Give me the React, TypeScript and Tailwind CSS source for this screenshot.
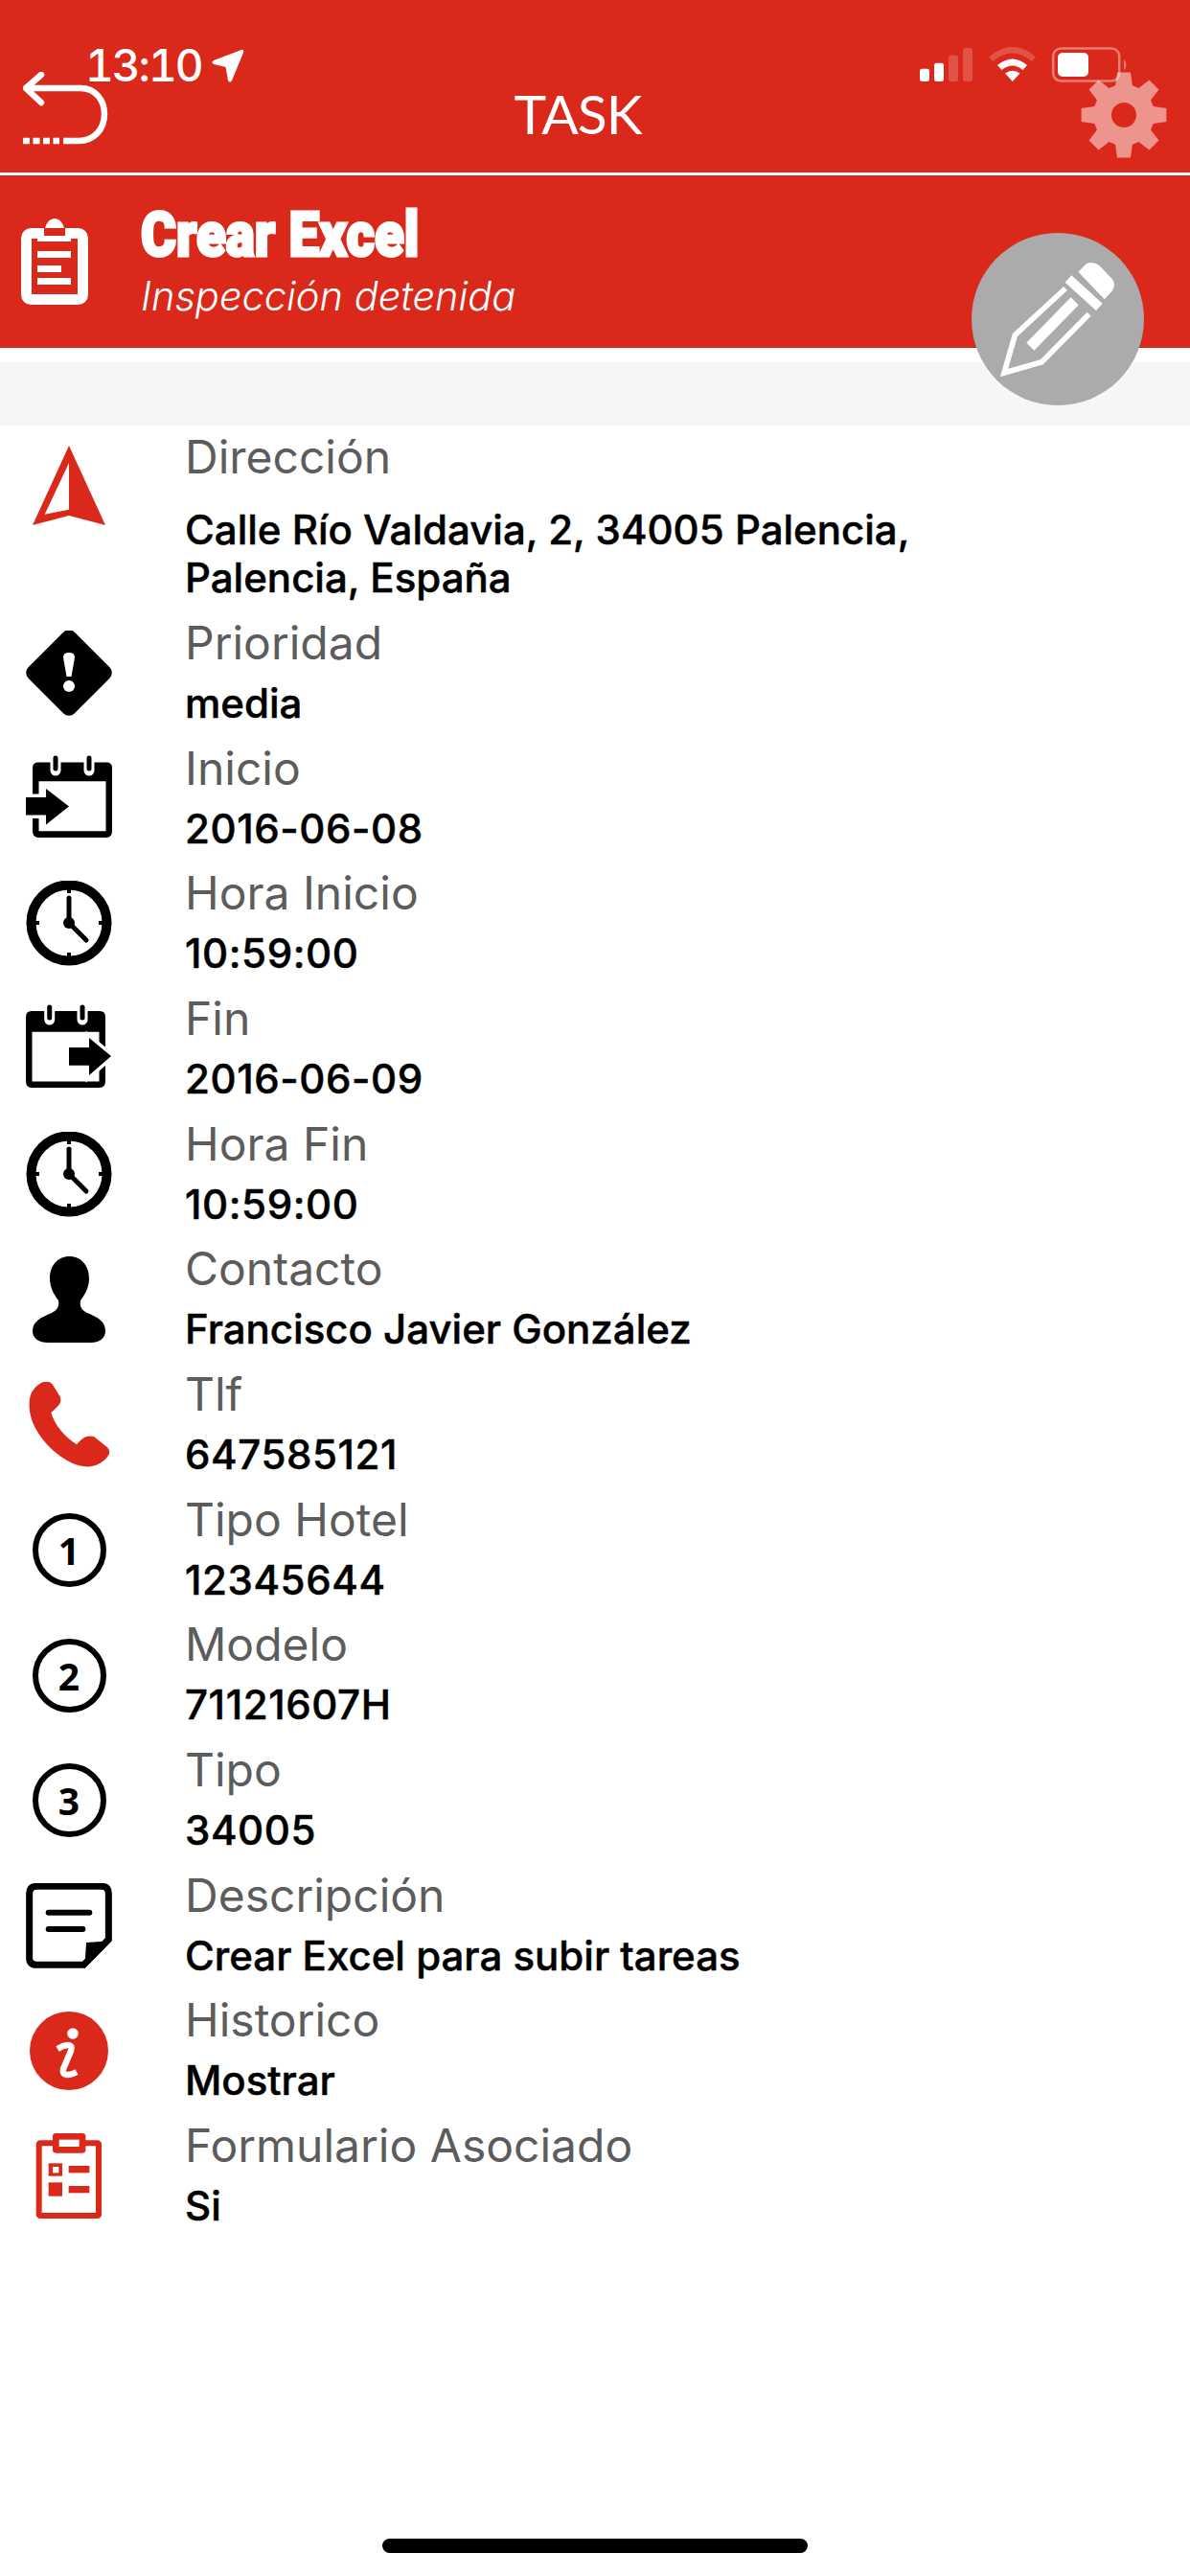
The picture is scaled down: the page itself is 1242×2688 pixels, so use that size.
import type { ReactNode } from 'react';

const RED = '#da291a';

function gearPath() {
  const cx = 45;
  const cy = 45;
  const pts: string[] = [];
  for (let i = 0; i < 8; i++) {
    const a = (i * Math.PI) / 4 - Math.PI / 2;
    const step = Math.PI / 4;
    const at = (r: number, t: number) =>
      `${(cx + r * Math.cos(t)).toFixed(1)} ${(cy + r * Math.sin(t)).toFixed(1)}`;
    pts.push(at(32, a - step * 0.36), at(45, a - step * 0.2), at(45, a + step * 0.2), at(32, a + step * 0.36));
  }
  return `M${pts.join('L')}Z M58 45 A13 13 0 1 0 32 45 A13 13 0 1 0 58 45Z`;
}

function BackIcon() {
  return (
    <svg viewBox="0 0 90 90" className="w-[90px] h-[90px] shrink-0" fill="none" stroke="white" strokeWidth="6.5">
      <path d="M19 3 L3 17 L19 32" strokeLinecap="round" strokeLinejoin="round" />
      <path d="M3 17 H60 C76 17 85 30 85 44 C85 60 74 72 58 72 H42" />
      <path d="M0 72 H38" strokeDasharray="7 3.5" />
    </svg>
  );
}

function GearIcon() {
  return (
    <svg viewBox="0 0 90 90" className="w-[90px] h-[90px] shrink-0">
      <path d={gearPath()} fill="white" fillOpacity="0.5" fillRule="evenodd" />
    </svg>
  );
}

function ClipboardWhite() {
  return (
    <svg viewBox="22 228 70 90" className="w-[70px] h-[90px] shrink-0">
      <rect x="27.5" y="243.5" width="59" height="69" rx="5" fill="none" stroke="white" strokeWidth="11" />
      <path d="M39 252 V238 H47 Q50 228 57 228 Q64 228 67 238 H74 V252 Z" fill="white" />
      <rect x="46" y="238" width="22" height="8" fill={RED} />
      <rect x="39" y="262" width="35" height="7" fill="white" />
      <rect x="39" y="277" width="25" height="7" fill="white" />
      <rect x="39" y="290" width="35" height="7" fill="white" />
    </svg>
  );
}

function PencilIcon() {
  return (
    <svg viewBox="342 668 540 540" className="w-full h-full">
      <path d="M676 790 L702 764 Q722 755 742 770 L782 812 Q796 830 782 850 L758 876 Z" fill="white" />
      <path d="M645 812 L742 900" stroke="white" strokeWidth="30" fill="none" />
      <path d="M636 842 L478 988 L444 1106 L562 1072 L710 922" stroke="white" strokeWidth="17" fill="none" />
      <path d="M665 882 L526 1024" stroke="white" strokeWidth="34" fill="none" />
    </svg>
  );
}

function StatusBar() {
  return (
    <div className="absolute inset-x-0 top-0 h-[100px]">
      <span className="absolute left-[89px] top-[40px] text-[46px] leading-[56px] font-medium tabular-nums tracking-[-2px] text-white [font-family:Inter,sans-serif]">
        13:10
      </span>
      <svg viewBox="0 0 34 36" className="absolute left-[221px] top-[51px] w-[34px] h-[36px]">
        <path d="M31 1 Q34 0 33 4 L21 33 Q19 36 17 33 L14.5 19 L2 16 Q-1 14 2 12 Z" fill="white" />
      </svg>
      <svg viewBox="960 49 218 37" className="absolute left-[960px] top-[49px] w-[218px] h-[37px]">
        <rect x="960" y="71.7" width="10" height="13.3" rx="2.5" fill="white" />
        <rect x="975" y="65.7" width="10" height="19.3" rx="2.5" fill="white" />
        <rect x="990" y="57.7" width="10" height="27.3" rx="2.5" fill="white" fillOpacity="0.2" />
        <rect x="1005" y="50" width="10" height="35" rx="2.5" fill="white" fillOpacity="0.2" />
        <path d="M1032 59.5 Q1056.7 38 1081 59.5 L1077 64 Q1056.7 47 1036 64 Z" fill="white" fillOpacity="0.2" />
        <path d="M1041 68 Q1056.7 55 1072 68 L1067.5 73 Q1056.7 64 1045.5 73 Z" fill="white" />
        <path d="M1049 76.5 Q1056.7 71 1064.5 76.5 L1056.7 85 Z" fill="white" />
        <rect x="1099.2" y="50.5" width="69" height="34" rx="8" fill="none" stroke="white" strokeOpacity="0.4" strokeWidth="2.5" />
        <rect x="1104" y="55" width="32" height="25" rx="5" fill="white" />
        <path d="M1173 61.5 Q1177.5 67.5 1173 73.5 Z" fill="white" fillOpacity="0.4" />
      </svg>
    </div>
  );
}

function NavIcon() {
  return (
    <svg viewBox="0 0 90 90" className="w-[90px] h-[90px]">
      <path d="M45 1 L83 84 L45 74 L7 84 Z M45 19 L19.7 72.7 L45 67.7 Z" fill={RED} fillRule="evenodd" />
    </svg>
  );
}

function PriorityIcon() {
  return (
    <svg viewBox="0 0 90 90" className="w-[90px] h-[90px]">
      <rect x="11" y="10" width="68" height="68" rx="8" transform="rotate(45 45 44)" fill="black" />
      <path d="M39 28 Q39 23 45 23 Q51 23 51 28 L47.5 48 H42.5 Z" fill="white" />
      <circle cx="45" cy="58" r="6" fill="white" />
    </svg>
  );
}

function CalendarIn() {
  return (
    <svg viewBox="0 0 90 90" className="w-[90px] h-[90px] overflow-visible">
      <path d="M13 6.4 H84 Q90 6.4 90 12 V78 Q90 85 84 85 H13 Q7 85 7 78 V12 Q7 6.4 13 6.4 Z M13.5 26.3 V78.3 H83.5 V26.3 Z" fill="black" fillRule="evenodd" />
      <path d="M31 2 V15 M66 2 V15" stroke="white" strokeWidth="11" strokeLinecap="round" />
      <path d="M31 2 V13 M66 2 V13" stroke="black" strokeWidth="5" strokeLinecap="round" />
      <path d="M0 43 H21 V34 L45 52.5 L21 71.5 V61.5 H0 Z" fill="black" stroke="white" strokeWidth="7" paintOrder="stroke" />
    </svg>
  );
}

function CalendarOut() {
  return (
    <svg viewBox="0 0 90 90" className="w-[90px] h-[90px] overflow-visible">
      <path d="M6 5 H77 Q83 5 83 11 V78 Q83 85 77 85 H6 Q0 85 0 78 V11 Q0 5 6 5 Z M6.5 26.7 V78.5 H76.5 V26.7 Z" fill="black" fillRule="evenodd" />
      <path d="M24.7 1 V14 M59 1 V14" stroke="white" strokeWidth="11" strokeLinecap="round" />
      <path d="M24.7 1 V12 M59 1 V12" stroke="black" strokeWidth="5" strokeLinecap="round" />
      <path d="M45 43 H66 V33 L89 52 L66 72 V61.7 H45 Z" fill="black" stroke="white" strokeWidth="7" paintOrder="stroke" />
    </svg>
  );
}

function ClockIcon() {
  return (
    <svg viewBox="0 0 90 90" className="w-[90px] h-[90px]" fill="none" stroke="black">
      <circle cx="45" cy="44" r="39.5" strokeWidth="10" />
      <path d="M45 8 V13 M45 75 V80 M9 44 H14 M76 44 H81" strokeWidth="4" />
      <path d="M45 18 V44 L63 62" strokeWidth="5" strokeLinecap="round" />
      <circle cx="45" cy="44" r="6" fill="black" stroke="none" />
    </svg>
  );
}

function PersonIcon() {
  return (
    <svg viewBox="0 0 90 90" className="w-[90px] h-[90px]">
      <path
        d="M45.5 0 C58 0 66 10 66 23 C66 34 60 42 57 46 C56 52 58 56 64 59 C76 64 83 68 83 78 C83 86 76 90 68 90 H23 C14 90 7 86 7 78 C7 68 15 64 27 59 C33 56 35 52 34 46 C31 42 25 34 25 23 C25 10 33 0 45.5 0 Z"
        fill="black"
      />
    </svg>
  );
}

function PhoneIcon() {
  return (
    <svg viewBox="81 126 270 270" className="w-[90px] h-[90px]">
      <path
        d="M120 135 C135 122 155 120 165 135 L188 172 C195 190 185 200 160 222 C170 260 205 300 240 322 C255 305 270 290 295 298 L335 330 C345 340 345 350 335 362 C315 385 290 395 260 390 C190 380 95 290 92 205 C90 170 100 150 120 135 Z"
        fill={RED}
      />
    </svg>
  );
}

function NumberIcon({ n }: { n: string }) {
  return (
    <div className="w-[90px] h-[90px] flex items-center justify-center">
      <div className="w-[77px] h-[77px] rounded-full border-[6px] border-black flex items-center justify-center text-[39px] leading-none font-bold text-black [font-family:'Open_Sans',sans-serif]">
        {n}
      </div>
    </div>
  );
}

function NoteIcon() {
  return (
    <svg viewBox="81 254 270 270" className="w-[90px] h-[90px]">
      <path
        d="M115 264 H318 Q340 264 340 286 V430 L262 510 H115 Q92 510 92 488 V286 Q92 264 115 264 Z"
        fill="none"
        stroke="black"
        strokeWidth="21"
      />
      <path d="M350 435 L265 520 L270 440 Z" fill="black" />
      <path d="M152 346 H280 M152 398 H259" stroke="black" strokeWidth="18" strokeLinecap="round" />
    </svg>
  );
}

function InfoIcon() {
  return (
    <svg viewBox="0 0 90 90" className="w-[90px] h-[90px]">
      <circle cx="45" cy="45" r="41" fill={RED} />
      <circle cx="49" cy="27" r="5.8" fill="white" />
      <path d="M33 43 C42 38 50 37 47 45 L39 64 C37 72 46 71 53 67" fill="none" stroke="white" strokeWidth="6.5" />
    </svg>
  );
}

function FormIcon() {
  return (
    <svg viewBox="81 1038 270 270" className="w-[90px] h-[90px]">
      <rect x="122" y="1069" width="187" height="227" fill="none" stroke={RED} strokeWidth="18" rx="4" />
      <rect x="165" y="1038" width="103" height="62" rx="10" fill={RED} />
      <rect x="185" y="1058" width="63" height="22" fill="white" />
      <rect x="152" y="1132" width="43" height="40" fill={RED} />
      <rect x="165" y="1143" width="19" height="19" fill="white" />
      <rect x="215" y="1140" width="65" height="22" fill={RED} />
      <rect x="152" y="1192" width="43" height="43" fill={RED} />
      <rect x="215" y="1203" width="65" height="22" fill={RED} />
    </svg>
  );
}

const rows: { label: string; value: string; icon: ReactNode }[] = [
  { label: 'Dirección', value: 'Calle Río Valdavia, 2, 34005 Palencia,\nPalencia, España', icon: <NavIcon /> },
  { label: 'Prioridad', value: 'media', icon: <PriorityIcon /> },
  { label: 'Inicio', value: '2016-06-08', icon: <CalendarIn /> },
  { label: 'Hora Inicio', value: '10:59:00', icon: <ClockIcon /> },
  { label: 'Fin', value: '2016-06-09', icon: <CalendarOut /> },
  { label: 'Hora Fin', value: '10:59:00', icon: <ClockIcon /> },
  { label: 'Contacto', value: 'Francisco Javier González', icon: <PersonIcon /> },
  { label: 'Tlf', value: '647585121', icon: <PhoneIcon /> },
  { label: 'Tipo Hotel', value: '12345644', icon: <NumberIcon n="1" /> },
  { label: 'Modelo', value: '71121607H', icon: <NumberIcon n="2" /> },
  { label: 'Tipo', value: '34005', icon: <NumberIcon n="3" /> },
  { label: 'Descripción', value: 'Crear Excel para subir tareas', icon: <NoteIcon /> },
  { label: 'Historico', value: 'Mostrar', icon: <InfoIcon /> },
  { label: 'Formulario Asociado', value: 'Si', icon: <FormIcon /> },
];

export default function App() {
  return (
    <div className="relative w-[1242px] h-[2688px] overflow-hidden bg-white [font-family:Inter,sans-serif]">
      <header className="h-[180px] bg-[#da291a] flex items-start px-[24px] pt-[75px]">
        <BackIcon />
        <h1 className="flex-1 pr-[36px] pt-[10px] text-center text-[57px] leading-[66px] tracking-[-1px] text-white font-normal [font-family:Lato,sans-serif]">
          TASK
        </h1>
        <GearIcon />
      </header>
      <div className="h-[3px] bg-white" />
      <section className="h-[180px] bg-[#da291a] flex items-start pl-[22px] pt-[45px]">
        <ClipboardWhite />
        <div className="ml-[55px] -mt-[23px]">
          <div className="origin-left scale-x-[0.87] whitespace-nowrap text-[65px] leading-[80px] font-black text-white [-webkit-text-stroke:3px_white] [font-family:Roboto,sans-serif]">
            Crear Excel
          </div>
          <div className="text-[41.6px] leading-[48px] italic font-light text-white">Inspección detenida</div>
        </div>
      </section>
      <div className="h-[15px] bg-white" />
      <div className="h-[66px] bg-[#f6f6f6]" />

      <ul>
        {rows.map((row, i) => (
          <li key={row.label + i} className={`flex ${i === 0 ? 'h-[194px]' : 'h-[130.67px]'}`}>
            <div className="w-[193px] shrink-0 pl-[27px] pt-[20px]">{row.icon}</div>
            <div className="pt-[3px]">
              <div className="text-[48px] leading-[60px] font-normal text-[#5c5c5c]">{row.label}</div>
              <div
                className={`whitespace-pre-line text-[42px] leading-[50px] font-medium text-black [-webkit-text-stroke:0.5px_black] ${
                  /^[\d:H-]+$/.test(row.value) ? 'tracking-[0.6px]' : ''
                } ${i === 0 ? 'mt-[21px]' : 'mt-[8px]'}`}
              >
                {row.value}
              </div>
            </div>
          </li>
        ))}
      </ul>

      <StatusBar />
      <button className="absolute left-[1014px] top-[243px] w-[180px] h-[180px] rounded-full bg-[#ababab]">
        <PencilIcon />
      </button>
      <div className="absolute left-[399px] top-[2649px] w-[444px] h-[15px] rounded-full bg-black" />
    </div>
  );
}
